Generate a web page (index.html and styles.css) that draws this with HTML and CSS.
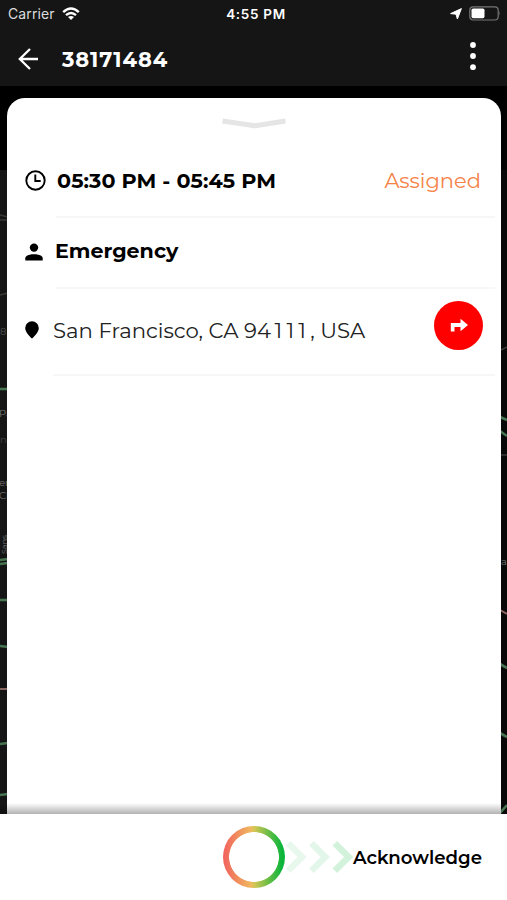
FILE: index.html
```html
<!DOCTYPE html>
<html lang="en">
<head>
    <meta charset="UTF-8">
    <meta name="viewport" content="width=device-width, initial-scale=1.0">
    <title>38171484</title>
    <link rel="stylesheet" href="styles.css">
</head>
<body>
    <header class="header">
        <div class="status-bar">
            <div class="carrier">
                <span>Carrier</span>
                <svg width="18" height="14" viewBox="0 0 18 14" fill="none" stroke="#fff" stroke-width="2.4">
                    <path d="M1.2 5.2Q9 -2 16.8 5.2M4 8.2Q9 3.8 14 8.2"/>
                    <path d="M9 13L6 10Q9 7.8 12 10Z" fill="#fff" stroke="none"/>
                </svg>
            </div>
            <div class="clock">4:55 PM</div>
            <div class="battery">
                <svg width="12" height="12" viewBox="0 0 12 12"><path d="M11.4 .6L7.4 11L6 6.2L.6 5.6Z" fill="#fff" stroke="#fff" stroke-linejoin="round"/></svg>
                <svg width="32" height="15" viewBox="0 0 32 15">
                    <rect x=".8" y=".8" width="28.4" height="13.2" rx="3.5" fill="none" stroke="#777" stroke-width="1.2"/>
                    <rect x="2.5" y="2.6" width="13" height="9.6" rx="1.6" fill="#fff"/>
                    <path d="M30.3 5Q32 7.4 30.3 9.8Z" fill="#777"/>
                </svg>
            </div>
        </div>
        <div class="nav-bar">
            <svg class="back" width="20" height="22" viewBox="0 0 20 22" fill="none" stroke="#fff" stroke-width="2.3"><path d="M20 11H1.5M12 1L1.8 11L12 21"/></svg>
            <h1 class="title">38171484</h1>
            <svg class="menu" width="6" height="28" viewBox="0 0 6 28" fill="#fff"><circle cx="3" cy="3" r="2.9"/><circle cx="3" cy="14" r="2.9"/><circle cx="3" cy="25.2" r="2.9"/></svg>
        </div>
    </header>

    <main class="main">
        <svg class="map" width="507" height="728" viewBox="0 86 507 728" fill="none">
            <path d="M0 86H507V170H0Z" fill="#000"/>
            <path d="M500 170H507V814H500Z" fill="#080808"/>
            <g stroke="#3b3934" stroke-width="1.5"><path d="M0 215L8 217M0 220H8M0 295L8 293M501 350L507 347M501 455H507"/></g>
            <g stroke="#477552" stroke-width="2.6">
                <path d="M0 389H8M0 560L8 559M0 564L8 563M0 600H8M0 646L8 647M0 744L8 743M0 795L8 794"/>
                <path d="M500 417L507 420M500 431L507 436M500 664L507 668M500 733L507 737M500 813L507 805"/>
            </g>
            <g stroke="#8a6660" stroke-width="2"><path d="M0 689H8M500 610L507 614"/></g>
            <g class="map-label">
                <text x="-1" y="417">Pa</text>
                <text x="0" y="443" opacity=".45">n</text>
                <text x="-1" y="486">er</text>
                <text x="-1" y="499">Ch</text>
                <text x="501" y="565">a</text>
                <text transform="translate(6.5 554) rotate(-90)" font-size="8">Sans</text>
                <text x="0" y="335" opacity=".6">8</text>
            </g>
        </svg>

        <section class="card">
            <svg class="handle" width="64" height="11" viewBox="0 0 64 11" fill="none" stroke="#e5e5e5" stroke-width="5"><path d="M.5 3L31 7.5Q33 7.8 35 7.5L63.5 3"/></svg>
            <div class="row time-row">
                <svg width="21" height="21" viewBox="0 0 21 21" fill="none" stroke="#000" stroke-width="1.9"><circle cx="10.5" cy="10.5" r="9.2"/><path d="M10.3 4.5V11H15.7"/></svg>
                <div class="cell">
                    <span class="time">05:30 PM - 05:45 PM</span>
                    <span class="state">Assigned</span>
                </div>
            </div>
            <div class="row type-row">
                <svg width="18" height="18" viewBox="0 0 18 18"><circle cx="9" cy="4.6" r="4.2"/><path d="M.3 17.5V15.2C.3 9.9 17.7 9.9 17.7 15.2V17.5Z"/></svg>
                <div class="cell"><span class="type">Emergency</span></div>
            </div>
            <div class="row address-row">
                <svg width="14" height="18" viewBox="0 0 14 18"><path d="M7 17.6C4.5 15.3 .2 11 .2 7A6.8 6.8 0 0 1 13.8 7C13.8 11 9.5 15.3 7 17.6Z"/></svg>
                <div class="cell">
                    <span class="address">San Francisco, CA 9<span class="digits">4111</span>, USA</span>
                    <button class="route">
                        <svg width="20" height="15" viewBox="0 0 20 15"><path d="M1.8 13.6V5H11.5V.8L19 7L11.5 13.2V9H5.5V13.6Z" fill="#fff"/></svg>
                    </button>
                </div>
            </div>
        </section>
        <div class="shade"></div>
    </main>

    <footer class="footer">
        <div class="ring"></div>
        <svg class="arrows" width="68" height="34" viewBox="0 0 68 34" fill="none" stroke="#1fbd52" stroke-width="6.5">
            <path d="M3.2 3.2L17 17L3.2 30.8" opacity=".1"/>
            <path d="M26.5 3.2L40.3 17L26.5 30.8" opacity=".13"/>
            <path d="M49.8 3.2L63.6 17L49.8 30.8" opacity=".2"/>
        </svg>
        <span class="action">Acknowledge</span>
    </footer>
</body>
</html>
```

FILE: styles.css
```css
* {
    box-sizing: border-box;
}
body {
    margin: 0;
    height: 900px;
    display: flex;
    flex-direction: column;
    font-family: Montserrat, Inter, sans-serif;
    background: #fff;
    color: #000;
    overflow: hidden;
    white-space: nowrap;
}
svg {
    flex: none;
    display: block;
}
.header {
    height: 86px;
    background: #151515;
    color: #fff;
}
.status-bar {
    display: grid;
    grid-template-columns: 1fr auto 1fr;
    align-items: center;
    height: 27px;
    padding: 0 6px 0 8px;
    font-family: Inter, sans-serif;
    font-size: 14px;
}
.carrier {
    display: flex;
    align-items: center;
    gap: 7px;
    color: #ddd;
    letter-spacing: 0.1px;
}
.clock {
    padding-left: 3px;
    font-weight: 600;
    font-size: 13.5px;
    letter-spacing: 0.7px;
}
.battery {
    display: flex;
    align-items: center;
    justify-content: flex-end;
    gap: 7px;
}
.nav-bar {
    display: flex;
    align-items: center;
    height: 59px;
    padding: 0 31px 0 18px;
}
.title {
    margin: 7px 0 0 24px;
    font-size: 21px;
    line-height: 24px;
    font-weight: 700;
    letter-spacing: 0.9px;
}
.back {
    margin-top: 4px;
}
.menu {
    margin: 0 0 2px auto;
}
.main {
    position: relative;
    height: 728px;
    padding: 12px 6px 0 7px;
    background: #151515;
}
.map {
    position: absolute;
    top: 0;
    left: 0;
}
.map-label {
    font-size: 10px;
    fill: #777;
}
.card {
    position: relative;
    height: 716px;
    padding: 20px 6px 0 18px;
    border-radius: 18px 18px 0 0;
    background: #fff;
}
.handle {
    margin: 0 0 0 197px;
}
.row {
    display: flex;
    align-items: center;
}
.cell {
    flex: 1;
    display: flex;
    align-items: center;
    justify-content: space-between;
    height: 100%;
    padding-right: 14px;
    border-bottom: 2px solid #f7f7f7;
}
.time-row {
    height: 73px;
    margin-top: 16px;
    gap: 10px;
}
.time-row svg {
    margin-bottom: 2px;
}
.type-row {
    height: 71px;
    gap: 12px;
}
.type-row svg {
    margin-bottom: 4px;
}
.address-row {
    height: 87px;
    gap: 14px;
}
.address-row > svg {
    margin-bottom: 5px;
}
.address-row .cell {
    padding-right: 12px;
}
.time {
    padding-left: 1px;
    font-size: 20.7px;
    font-weight: 700;
    letter-spacing: 0.1px;
}
.state {
    font-size: 21px;
    color: #f58247;
}
.type {
    margin-bottom: 4px;
    font-size: 20.6px;
    font-weight: 700;
}
.address {
    margin-bottom: 4px;
    font-size: 21.2px;
    color: #222;
}
.digits {
    letter-spacing: 4.2px;
}
.route {
    display: flex;
    align-items: center;
    justify-content: center;
    width: 49px;
    height: 49px;
    margin-bottom: 13px;
    padding: 0;
    border: none;
    border-radius: 50%;
    background: #fe0000;
}
.shade {
    position: absolute;
    left: 0;
    right: 6px;
    bottom: 0;
    height: 11px;
    background: linear-gradient(rgba(0,0,0,0), rgba(0,0,0,0.3));
}
.footer {
    display: flex;
    align-items: center;
    height: 86px;
    padding: 0 25px 0 223px;
    background: #fff;
}
.ring {
    width: 62px;
    height: 62px;
    border-radius: 50%;
    background: radial-gradient(circle, #fff 24.5px, transparent 25.2px), linear-gradient(90deg, #f1605d, #efb85f 45%, #d5c655 50%, #62bd45 75%, #0bb53b 95%);
}
.action {
    font-size: 18.2px;
    font-weight: 600;
}
```
